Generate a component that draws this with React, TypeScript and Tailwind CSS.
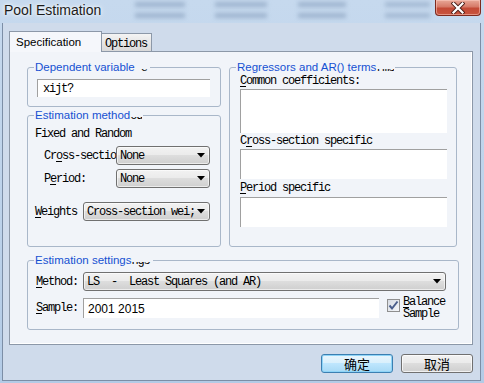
import React from "react";

const mono = "font-['Liberation_Mono',monospace] text-[12px] tracking-[-1.2px] text-black whitespace-nowrap";
const u = "underline decoration-1 underline-offset-[2px]";

function Arrow() {
  return (
    <svg width="8" height="5" viewBox="0 0 8 5" className="shrink-0">
      <polygon points="0,0 8,0 4,4.5" fill="#000" />
    </svg>
  );
}

function Combo({ text, w }: { text: string; w: string }) {
  return (
    <div
      className={`${w} h-[19px] shrink-0 rounded-[3px] border border-[#707070] bg-[linear-gradient(180deg,#f2f2f2_0%,#ebebeb_45%,#dddddd_50%,#cfcfcf_100%)] flex items-center justify-between pl-[3px] pr-[4px] shadow-[inset_0_0_0_1px_rgba(255,255,255,0.6)]`}
    >
      <span className={`${mono} leading-[12px] whitespace-pre`}>{text}</span>
      <Arrow />
    </div>
  );
}

function Legend({ text, art, artW }: { text: string; art: string; artW: string }) {
  return (
    <div className="absolute left-[6px] -top-[8px] flex items-start bg-[#f1f4f9] pl-[1px] pr-[1px]">
      <span className="text-[11.5px] leading-[14px] text-[#1551d2] whitespace-nowrap">{text}</span>
      <span className={`${artW} h-[14px] overflow-hidden flex flex-col justify-end`}>
        <span className={`${mono} leading-[12px] block h-[5px] overflow-hidden text-[#222] whitespace-pre`}>
          <span className="block -mt-[7px]">{art}</span>
        </span>
      </span>
    </div>
  );
}

function TextBox({ w, h }: { w: string; h: string }) {
  return <div className={`${w} ${h} shrink-0 bg-white border-t border-l border-[#a0a0a0]`} />;
}

export default function App() {
  return (
    <div className="relative w-[484px] h-[383px] overflow-hidden bg-[linear-gradient(180deg,#c6d9ee_0%,#bcd2ea_60%,#b3cbe6_100%)] flex flex-col font-['Liberation_Sans',sans-serif]">
      {/* Title bar */}
      <div className="relative h-[23px] shrink-0 flex items-start">
        <div className="absolute inset-0 overflow-hidden">
          <div className="absolute left-[135px] top-[2px] w-[50px] h-[5px] bg-[#8ea5c2] blur-[2px] opacity-70" />
          <div className="absolute left-[135px] top-[13px] w-[50px] h-[5px] bg-[#8ea5c2] blur-[2px] opacity-70" />
          <div className="absolute left-[215px] top-[2px] w-[52px] h-[5px] bg-[#8ea5c2] blur-[2px] opacity-70" />
          <div className="absolute left-[215px] top-[13px] w-[52px] h-[5px] bg-[#8ea5c2] blur-[2px] opacity-70" />
          <div className="absolute left-[298px] top-[2px] w-[48px] h-[5px] bg-[#8ea5c2] blur-[2px] opacity-70" />
          <div className="absolute left-[298px] top-[13px] w-[48px] h-[5px] bg-[#8ea5c2] blur-[2px] opacity-70" />
          <div className="absolute left-[385px] top-[2px] w-[45px] h-[5px] bg-[#8ea5c2] blur-[2px] opacity-60" />
          <div className="absolute left-[385px] top-[13px] w-[45px] h-[5px] bg-[#8ea5c2] blur-[2px] opacity-60" />
        </div>
        <span className="relative mt-[1px] ml-[4px] text-[14px] leading-[18px] text-[#1b1b1b] [text-shadow:0_0_6px_#ffffff,0_0_3px_#ffffff]">
          Pool Estimation
        </span>
        <div className="absolute right-[3px] top-0 w-[46px] h-[16px] rounded-b-[4px] border border-t-0 border-[#7d2a1e] bg-[linear-gradient(180deg,#e8a898_0%,#d67a68_45%,#c34a36_55%,#c9553f_100%)] shadow-[inset_0_0_0_1px_rgba(255,210,200,0.5)] flex items-center justify-center">
          <svg width="14" height="12" viewBox="0 0 14 12">
            <path d="M2.5 1.5 L11.5 10.5 M11.5 1.5 L2.5 10.5" stroke="#4a1e18" strokeWidth="4" strokeLinecap="square" />
            <path d="M2.5 1.5 L11.5 10.5 M11.5 1.5 L2.5 10.5" stroke="#ffffff" strokeWidth="2.2" strokeLinecap="square" />
          </svg>
        </div>
      </div>

      {/* Client area */}
      <div className="flex-1 ml-[2px] mr-[3px] mb-[2px] border-x border-b border-[#7c8ea6] bg-[#cfdbeb] flex flex-col pl-[6px] pr-[7px] pt-[8px]">
        {/* Tabs */}
        <div className="h-[20px] flex items-start shrink-0">
          <div className="relative z-10 w-[93px] h-[21px] border border-b-0 border-[#8c98a8] bg-[#f5f7fb] pl-[6px] pt-[3px] text-[11.5px] leading-[14px] text-black whitespace-nowrap">
            Specification
          </div>
          <div className={`mt-[2px] w-[50px] h-[18px] border border-b-0 border-l-0 border-[#8c98a8] bg-[linear-gradient(180deg,#f4f4f4,#e6e6e6_50%,#d9d9d9)] pl-[3px] pt-[4px] ${mono} leading-[12px]`}>
            Options
          </div>
        </div>

        {/* Panel */}
        <div className="h-[294px] shrink-0 border border-[#8c98a8] bg-[#f1f4f9] shadow-[inset_-1px_-1px_0_#ffffff] pl-[17px] pt-[15px] flex flex-col">
          <div className="flex gap-[8px]">
            {/* Left column */}
            <div className="flex flex-col gap-[8px] w-[194px]">
              <div className="relative h-[40px] rounded-[3px] border border-[#a9b7c9] pt-[11px] pl-[9px]">
                <Legend text="Dependent variable" art=" e" artW="w-[14px]" />
                <div className={`w-[173px] h-[18px] bg-white border-t border-l border-[#a0a0a0] flex items-center pl-[5px] ${mono} leading-[12px]`}>
                  xijt?
                </div>
              </div>
              <div className="relative h-[132px] rounded-[3px] border border-[#a9b7c9] pt-[12px] pl-[7px] flex flex-col">
                <Legend text="Estimation method" art="od" artW="w-[12px]" />
                <div className={`${mono} leading-[12px] h-[12px]`}>Fixed and Random</div>
                <div className="mt-[6px] flex items-center">
                  <div className={`${mono} leading-[12px] w-[72px] shrink-0 ml-[9px]`}>
                    Cr<span className={u}>o</span>ss-sectio
                  </div>
                  <Combo text="None" w="w-[94px]" />
                </div>
                <div className="mt-[4px] flex items-center">
                  <div className={`${mono} leading-[12px] w-[72px] shrink-0 ml-[9px]`}>
                    P<span className={u}>e</span>riod:
                  </div>
                  <Combo text="None" w="w-[94px]" />
                </div>
                <div className="mt-[14px] flex items-center">
                  <div className={`${mono} leading-[12px] w-[48px] shrink-0`}>
                    <span className={u}>W</span>eights
                  </div>
                  <Combo text="Cross-section wei;" w="w-[127px]" />
                </div>
              </div>
            </div>

            {/* Right group */}
            <div className="relative w-[228px] h-[180px] rounded-[3px] border border-[#a9b7c9] pt-[7px] pl-[10px] flex flex-col">
              <Legend text="Regressors and AR() terms" art="rms" artW="w-[18px]" />
              <div className={`${mono} leading-[12px] h-[12px]`}>
                <span className={u}>C</span>ommon coefficients:
              </div>
              <div className="mt-[2px]">
                <TextBox w="w-[207px]" h="h-[44px]" />
              </div>
              <div className={`${mono} leading-[12px] h-[12px] mt-[2px]`}>
                C<span className={u}>r</span>oss-section specific
              </div>
              <div className="mt-[2px]">
                <TextBox w="w-[207px]" h="h-[30px]" />
              </div>
              <div className={`${mono} leading-[12px] h-[12px] mt-[3px]`}>
                <span className={u}>P</span>eriod specific
              </div>
              <div className="mt-[3px]">
                <TextBox w="w-[207px]" h="h-[30px]" />
              </div>
            </div>
          </div>

          {/* Estimation settings */}
          <div className="relative mt-[13px] w-[432px] h-[70px] rounded-[3px] border border-[#a9b7c9] pt-[11px] pl-[8px] flex flex-col">
            <Legend text="Estimation settings" art="ngs" artW="w-[20px]" />
            <div className="flex items-center">
              <div className={`${mono} leading-[12px] w-[47px] shrink-0`}>
                <span className={u}>M</span>ethod:
              </div>
              <Combo text="LS  -  Least Squares (and AR)" w="w-[363px]" />
            </div>
            <div className="mt-[7px] flex items-start">
              <div className={`${mono} leading-[12px] w-[47px] shrink-0 mt-[4px]`}>
                <span className={u}>S</span>ample:
              </div>
              <div className="w-[296px] h-[20px] shrink-0 bg-white border-t border-l border-[#a0a0a0] flex items-center pl-[4px] text-[12px] leading-[14px] text-black">
                2001 2015
              </div>
              <div className="ml-[8px] mt-[1px] w-[13px] h-[13px] shrink-0 border border-[#8f8f8f] bg-[linear-gradient(135deg,#d6dbe3,#f4f6f9)] flex items-center justify-center">
                <svg width="11" height="11" viewBox="0 0 11 11">
                  <path d="M1.5 5.5 L4 8.5 L9.5 1.5" fill="none" stroke="#4a5e8c" strokeWidth="2" />
                </svg>
              </div>
              <div className="ml-[3px] -mt-[2px] flex flex-col">
                <div className={`${mono} leading-[12px] h-[12px]`}>
                  <span className={u}>B</span>alance
                </div>
                <div className={`${mono} leading-[12px] h-[12px]`}>Sample</div>
              </div>
            </div>
          </div>
        </div>

        {/* Buttons */}
        <div className="mt-[9px] flex justify-end gap-[8px]">
          <div className="w-[72px] h-[19px] rounded-[3px] border border-[#3c7fb1] bg-[linear-gradient(180deg,#eaf6fd_0%,#d9f0fc_45%,#bee6fd_50%,#a7d9f5_100%)] shadow-[inset_0_0_0_1px_#8ed4f7] flex items-center justify-center text-[13px] leading-[15px] text-black font-['Noto_Sans_CJK_SC',sans-serif]">
            确定
          </div>
          <div className="w-[72px] h-[19px] rounded-[3px] border border-[#707070] bg-[linear-gradient(180deg,#f2f2f2_0%,#ebebeb_45%,#dddddd_50%,#cfcfcf_100%)] shadow-[inset_0_0_0_1px_rgba(255,255,255,0.7)] flex items-center justify-center text-[13px] leading-[15px] text-black font-['Noto_Sans_CJK_SC',sans-serif]">
            取消
          </div>
        </div>
      </div>
    </div>
  );
}
